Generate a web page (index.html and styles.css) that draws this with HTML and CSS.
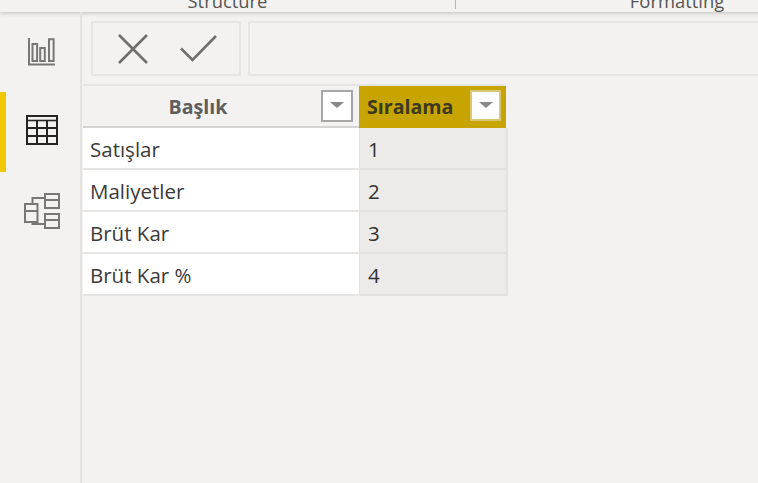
FILE: index.html
```html
<!DOCTYPE html>
<html lang="tr">
<head>
<meta charset="utf-8">
<title>Tablo</title>
<link rel="stylesheet" href="styles.css">
</head>
<body>
<div class="app">
  <header class="ribbon">
    <div class="group group-structure"><span class="group-label">Structure</span></div>
    <div class="ribbon-divider"></div>
    <div class="group group-formatting"><span class="group-label">Formatting</span></div>
  </header>
  <div class="main">
    <nav class="rail">
      <div class="rail-item rail-report">
        <svg width="28" height="28" viewBox="0 0 28 28" fill="none" stroke="#777" stroke-width="2"><path d="M1 0v26.5h26"/><rect x="4.5" y="6" width="4.6" height="17"/><rect x="12.2" y="10" width="4.6" height="13"/><rect x="21" y="1.2" width="4.6" height="21.8"/></svg>
      </div>
      <div class="rail-item rail-active">
        <svg width="32" height="30" viewBox="0 0 32 30" fill="none" stroke="#252423" stroke-width="2"><rect x="1" y="1" width="30" height="28"/><path d="M1 5.5h30" stroke-width="1.6"/><path d="M1 13h30M1 21h30M11 5.5V29M21 5.5V29"/></svg>
      </div>
      <div class="rail-item rail-model">
        <svg width="36" height="36" viewBox="0 0 36 36" fill="none" stroke="#777" stroke-width="2"><rect x="1" y="11" width="12.5" height="18"/><path d="M1 18h12.5"/><rect x="21" y="1" width="14" height="14"/><path d="M21 7h14"/><rect x="21" y="21" width="14" height="14"/><path d="M21 27h14"/><path d="M8.5 11V5H21M8.5 29v2H21"/></svg>
      </div>
    </nav>
    <section class="content">
      <div class="formula-bar">
        <div class="formula-actions">
          <svg width="30" height="30" viewBox="0 0 30 30" fill="none" stroke="#6f6f6f" stroke-width="2.6"><path d="M1 1l28 28M29 1L1 29"/></svg>
          <svg width="37" height="27" viewBox="0 0 37 27" fill="none" stroke="#6f6f6f" stroke-width="2.6"><path d="M1 13.5l11.5 11.5L36 1"/></svg>
        </div>
        <div class="formula-input"></div>
      </div>
      <div class="table">
        <div class="cell head head-plain">
          <span class="head-label">Başlık</span>
          <span class="filter"><i class="caret"></i></span>
        </div>
        <div class="cell head head-selected">
          <span class="head-label">Sıralama</span>
          <span class="filter"><i class="caret"></i></span>
        </div>
        <div class="cell name">Satışlar</div><div class="cell value">1</div>
        <div class="cell name">Maliyetler</div><div class="cell value">2</div>
        <div class="cell name">Brüt Kar</div><div class="cell value">3</div>
        <div class="cell name">Brüt Kar %</div><div class="cell value">4</div>
      </div>
    </section>
  </div>
</div>
</body>
</html>
```
FILE: styles.css
```css
* { box-sizing: border-box; }
html, body { margin: 0; height: 100%; }
body {
  background: #f3f2f1;
  font-family: "Open Sans", "Noto Sans", sans-serif;
  color: #323130;
  overflow: hidden;
}
.app { width: 758px; height: 483px; display: flex; flex-direction: column; overflow: hidden; }
.ribbon {
  height: 12px;
  flex: none;
  display: flex;
  width: 900px;
  background: #f3f2f1;
  box-shadow: 0 1px 4px rgba(0,0,0,.22);
}
.group { height: 12px; display: flex; justify-content: center; align-items: flex-end; }
.group-structure { width: 455px; }
.ribbon-divider { width: 1px; height: 9px; background: #b5b5b5; flex: none; }
.group-formatting { width: 442px; }
.group-label { font-size: 18.4px; line-height: 18px; color: #555; flex: none; margin-bottom: 2px; }
.main { flex: 1; display: flex; min-height: 0; }
.rail {
  width: 82px;
  flex: none;
  border-right: 2px solid #e3e2e1;
  display: flex;
  flex-direction: column;
}
.rail-item { height: 80px; display: flex; align-items: center; justify-content: center; padding-left: 3px; }
.rail-active { box-shadow: inset 6px 0 0 #f0c800; padding-bottom: 4px; }
.rail-model { padding-bottom: 2px; padding-left: 4px; }
.content { flex: 1; min-width: 0; display: flex; flex-direction: column; }
.formula-bar { display: flex; gap: 7px; height: 55px; padding-left: 9px; margin-top: 9px; flex: none; }
.formula-actions {
  width: 150px;
  border: 2px solid #e6e5e4;
  border-radius: 2px;
  display: flex;
  align-items: center;
  gap: 32px;
  padding-left: 25px;
}
.formula-input { flex: 1; border: 2px solid #e6e5e4; border-right: none; border-radius: 2px 0 0 2px; }
.table {
  margin-top: 8px;
  display: grid;
  grid-template-columns: 276px 149px;
  grid-template-rows: 44px repeat(4, 42px);
  width: 425px;
  margin-left: 1px;
}
.cell { display: flex; align-items: center; font-size: 20.5px; padding-left: 7px; }
.head {
  background: #f3f2f1;
  border-top: 2px solid #e6e5e4;
  border-bottom: 2px solid #d4d3d2;
  position: relative;
  font-size: 19.6px;
  font-weight: 700;
  color: #605e5c;
}
.head-plain { justify-content: center; padding-left: 0; padding-right: 46px; }
.head .filter { position: absolute; right: 6px; top: 4px; }
.filter {
  width: 32px;
  height: 32px;
  background: #fff;
  border: 2px solid #a6a6a6;
  display: flex;
  justify-content: center;
  padding-top: 10px;
}
.caret {
  display: block;
  width: 0;
  height: 0;
  border-left: 7px solid transparent;
  border-right: 7px solid transparent;
  border-top: 6px solid #8a8886;
}
.head-selected {
  background: #c8a400;
  color: #3b3a20;
  justify-content: flex-start;
  padding-left: 8px;
  border-bottom-color: #c8a400;
  border-top-color: #e6e5e4;
  margin-right: 2px;
}
.head-selected .filter { right: 5px; top: 4px; border-color: #d9c873; width: 31px; height: 31px; }
.name {
  background: #fff;
  color: #3b3a39;
  border-bottom: 2px solid #e6e5e4;
  padding-top: 1px;
}
.value {
  background: #edebe9;
  border-bottom: 2px solid #e3e2e1;
  border-right: 2px solid #e3e2e1;
  border-left: 1px solid #e3e2e1;
  padding-left: 8px;
  padding-top: 1px;
}
```
